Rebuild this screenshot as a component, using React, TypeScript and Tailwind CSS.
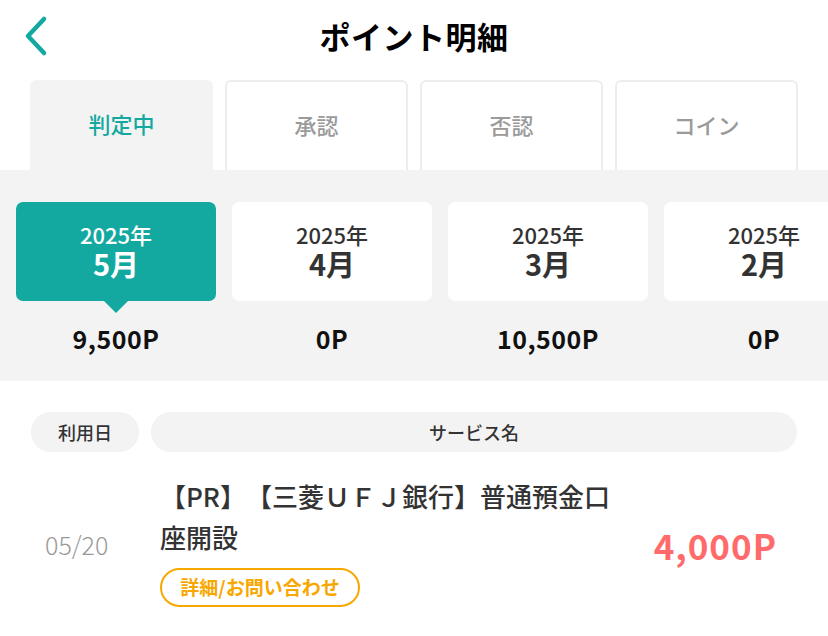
import React from "react";

const TEAL = "#14a9a0";

const tabs = ["判定中", "承認", "否認", "コイン"];

const months = [
  { year: "2025年", month: "5月", points: "9,500P" },
  { year: "2025年", month: "4月", points: "0P" },
  { year: "2025年", month: "3月", points: "10,500P" },
  { year: "2025年", month: "2月", points: "0P" },
];

function BackIcon() {
  return (
    <svg width="30" height="44" viewBox="0 0 30 44" fill="none">
      <path
        d="M22 5 L6 22 L22 39"
        stroke={TEAL}
        strokeWidth="4.5"
        strokeLinecap="round"
        strokeLinejoin="round"
      />
    </svg>
  );
}

export default function App() {
  const selected = 0;

  return (
    <div className="h-[636px] w-[828px] overflow-hidden bg-white font-['Noto_Sans_CJK_JP',sans-serif] text-[#333]">
      {/* header */}
      <header className="grid h-[80px] grid-cols-[80px_1fr_80px] items-center pb-[8px]">
        <button className="flex items-center pl-[22px]">
          <BackIcon />
        </button>
        <h1 className="text-center text-[31px] font-bold tracking-[0.5px] text-black">
          ポイント明細
        </h1>
        <div />
      </header>

      {/* tabs */}
      <nav className="flex h-[90px] gap-[12px] px-[30px]">
        {tabs.map((t, i) =>
          i === selected ? (
            <div
              key={t}
              className="flex w-[183px] items-center justify-center rounded-t-[6px] bg-[#f3f3f3] pb-[4px] text-[22px] font-medium"
              style={{ color: TEAL }}
            >
              {t}
            </div>
          ) : (
            <div
              key={t}
              className="flex w-[183px] items-center justify-center rounded-t-[6px] border-2 border-b-0 border-[#ededed] bg-white pb-[4px] text-[22px] font-medium text-[#9a9a9a]"
            >
              {t}
            </div>
          ),
        )}
      </nav>

      {/* months */}
      <section className="h-[211px] overflow-hidden bg-[#f3f3f3] pt-[32px]">
        <div className="flex gap-[16px] pl-[16px]">
          {months.map((m, i) => (
            <div key={m.month} className="flex w-[200px] shrink-0 flex-col items-center">
              <div
                className={
                  i === selected
                    ? "relative flex h-[99px] w-full flex-col items-center justify-center rounded-[7px] bg-[#14a9a0] pb-[4px] text-white"
                    : "relative flex h-[99px] w-full flex-col items-center justify-center rounded-[7px] bg-white pb-[4px] text-[#333]"
                }
              >
                <span className="text-[22px] leading-[26px] font-medium">{m.year}</span>
                <span className="text-[29px] leading-[32px] font-bold">{m.month}</span>
                {i === selected && (
                  <span className="absolute top-full left-1/2 h-0 w-0 -translate-x-1/2 border-x-[12px] border-t-[12px] border-x-transparent border-t-[#14a9a0]" />
                )}
              </div>
              <div className="mt-[21px] text-[25px] leading-[32px] font-bold tracking-[0.5px] text-[#111]">
                {m.points}
              </div>
            </div>
          ))}
        </div>
      </section>

      {/* list */}
      <section className="px-[31px] pt-[31px]">
        <div className="flex gap-[12px]">
          <div className="flex h-[40px] w-[108px] items-center justify-center rounded-full bg-[#f3f3f3] text-[18px] font-medium">
            利用日
          </div>
          <div className="flex h-[40px] flex-1 items-center justify-center rounded-full bg-[#f3f3f3] text-[18px] font-medium">
            サービス名
          </div>
        </div>

        <div className="mt-[23px] flex items-center pr-[20px] pl-[14px]">
          <div className="mt-[8px] w-[115px] text-[25px] font-light text-[#9a9a9a]">05/20</div>
          <div className="flex w-[460px] flex-col items-start">
            <p className="text-[26px] leading-[41px] font-medium text-[#333] [text-spacing-trim:space-all]">
              【PR】【三菱ＵＦＪ銀行】普通預金口座開設
            </p>
            <button className="mt-[11px] flex h-[39px] w-[200px] items-center justify-center rounded-full border-2 border-[#f7a800] text-[19px] font-bold text-[#f7a800]">
              詳細/お問い合わせ
            </button>
          </div>
          <div className="mt-[8px] flex-1 text-right text-[35px] font-bold tracking-[1px] text-[#ff6b6b]">
            4,000P
          </div>
        </div>
      </section>
    </div>
  );
}
